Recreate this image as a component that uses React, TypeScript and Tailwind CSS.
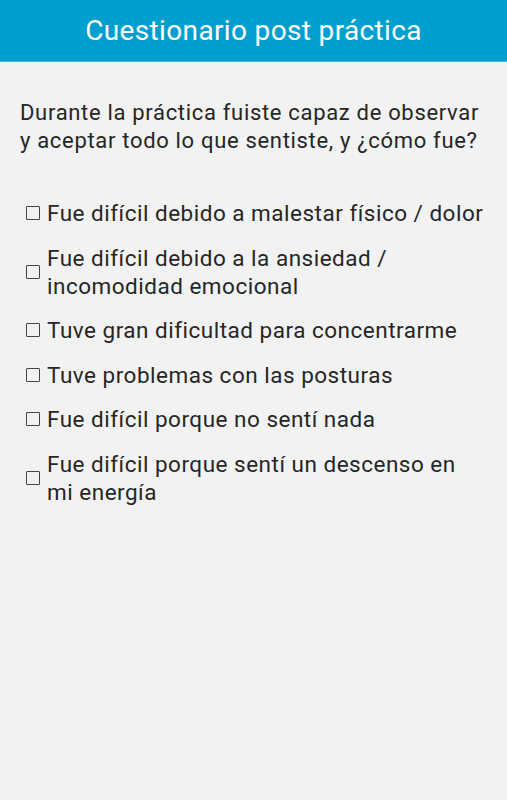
import React from "react";

const options = [
  "Fue difícil debido a malestar físico / dolor",
  "Fue difícil debido a la ansiedad / incomodidad emocional",
  "Tuve gran dificultad para concentrarme",
  "Tuve problemas con las posturas",
  "Fue difícil porque no sentí nada",
  "Fue difícil porque sentí un descenso en mi energía",
];

export default function App() {
  return (
    <div className="w-[507px] h-[800px] bg-[#f2f2f2] flex flex-col" style={{ fontFamily: "Roboto, sans-serif" }}>
      <div className="h-[62px] bg-[#009fce] border-b border-[#4fbde0] flex items-center justify-center shrink-0">
        <span className="text-white text-[28px] leading-none tracking-[0.35px]">Cuestionario post práctica</span>
      </div>
      <div className="pl-[20px] pr-[22px] pt-[37px]">
        <p className="text-[#262626] text-[22px] leading-[28px] tracking-[0.68px]">
          Durante la práctica fuiste capaz de observar y aceptar todo lo que sentiste, y ¿cómo fue?
        </p>
      </div>
      <div className="pl-[26px] pr-[22px] pt-[44px] flex flex-col gap-[16.5px]">
        {options.map((o) => (
          <div key={o} className="flex items-center gap-[7px]">
            <span className="w-[14px] h-[14px] border-[1.5px] border-[#444] rounded-[1px] shrink-0" />
            <span className="text-[#262626] text-[22.5px] leading-[28px] tracking-[0.5px]">{o}</span>
          </div>
        ))}
      </div>
    </div>
  );
}
